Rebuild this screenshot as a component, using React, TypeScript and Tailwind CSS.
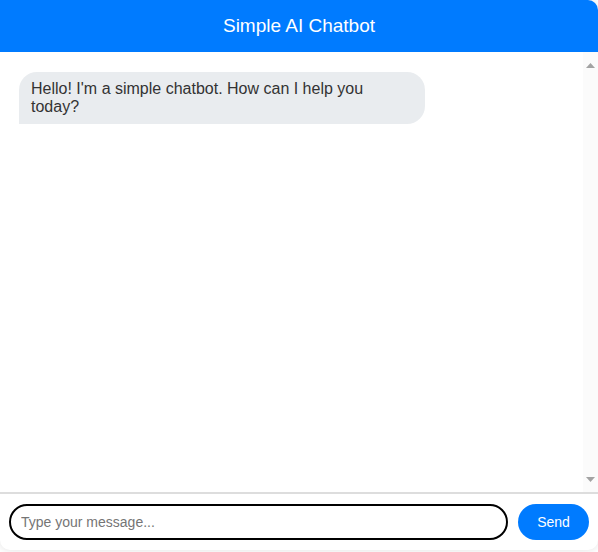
import React, { useState } from 'react';

const App: React.FC = () => {
  const [text, setText] = useState('');

  return (
    <div className="w-full h-[552px] bg-white" style={{ fontFamily: '"Liberation Sans", Arial, sans-serif' }}>
      <div className="flex flex-col h-[550px] w-full rounded-[10px] rounded-tl-none overflow-hidden bg-white shadow-[0_0_8px_rgba(0,0,0,0.12)]">
        <div className="bg-[#007bff] text-white text-center text-[19px] py-[15px] leading-[22px]">
          Simple AI Chatbot
        </div>

        <div className="flex flex-1 min-h-0">
          <div className="flex-1 overflow-hidden px-[19px] py-5">
            <div className="w-[406px] bg-[#e9ecef] text-[#333] text-base leading-[18px] px-3 py-2 rounded-[18px] rounded-bl-none">
              Hello! I'm a simple chatbot. How can I help you today?
            </div>
          </div>
          {/* scrollbar */}
          <div className="w-[15px] bg-[#fbfbfb] flex flex-col justify-between items-center pt-[11px] pb-[10px]">
            <svg width="9" height="5" viewBox="0 0 9 5"><path d="M0 5 L4.5 0 L9 5 Z" fill="#a3a3a3" /></svg>
            <svg width="9" height="5" viewBox="0 0 9 5"><path d="M0 0 L4.5 5 L9 0 Z" fill="#a3a3a3" /></svg>
          </div>
        </div>

        <div className="flex items-center gap-[10px] border-t-2 border-[#ddd] px-[9px] pt-[10px] pb-[10px]">
          <input
            value={text}
            onChange={(e) => setText(e.target.value)}
            placeholder="Type your message..."
            className="flex-1 h-9 border-2 border-black rounded-full px-[10px] text-sm text-black placeholder:text-[#757575] outline-none"
            style={{ fontFamily: '"Liberation Sans", Arial, sans-serif' }}
          />
          <button className="h-9 w-[71px] rounded-full bg-[#007bff] text-white text-sm">
            Send
          </button>
        </div>
      </div>
    </div>
  );
};

export default App;
